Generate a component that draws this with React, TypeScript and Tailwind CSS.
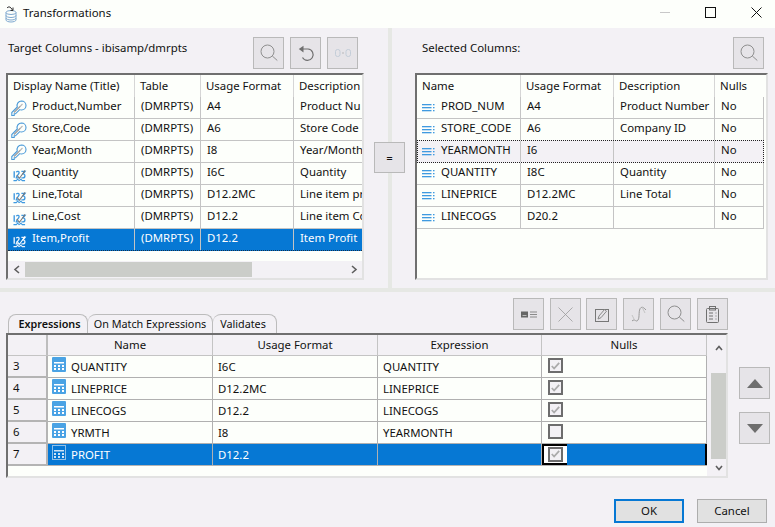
import React from "react";

const BLUE = "#3f9ae0";

function Key({ white }: { white?: boolean }) {
  const c = white ? "#d5e6f5" : "#4a9ad8";
  return (
    <svg width="16" height="17" viewBox="0 0 16 17" fill="none" strokeWidth="1.100" className="shrink-0 mt-[3px]">
      <path
        d="M10.500 1a4.500 4.500 0 0 1 0 9c-.7 0-1.300-.1-1.800-.4L4.500 13.800H3.200V15.500H.8V12.500L6.300 7a4.500 4.500 0 0 1 4.200-6z"
        stroke={c}
      />
      <path d="M3 12.500L9.500 6" stroke="#9a9a9a" />
      <path d="M9.500 6l2-2" stroke="#b8b8b8" />
    </svg>
  );
}

function NumIcon({ white }: { white?: boolean }) {
  const c = white ? "#e6f0fa" : BLUE;
  return (
    <svg width="15" height="13" viewBox="0 0 15 14" fill="none" className="shrink-0 mt-[6px] ml-[1px]">
      <path d="M1.800 2.500v7" stroke={c} strokeWidth="1.500" />
      <path d="M4 3.500c1-1.500 3.500-1 3 .8S4 7.500 4 9.500h3.500" stroke={c} strokeWidth="1.400" />
      <path d="M9.500 2.500h4l-2 2.800c2.500 0 2.500 4.200-.3 4.200H9.500" stroke={c} strokeWidth="1.400" />
      <path d="M1 12.500h3l1.500-1.500 1.500 1.500 2-1.500 1.500 1.500h3" stroke={c} strokeWidth="1.200" />
      <path d="M4.500 6.500l3 3.500L13.500 1.500" stroke={white ? "#ffffff" : "#777777"} strokeWidth="1.100" />
    </svg>
  );
}

function Lines() {
  return (
    <svg width="13" height="8" viewBox="0 0 13 8" className="shrink-0 mt-[7px]">
      <rect x="0" y="0" width="9.500" height="1.300" fill={BLUE} />
      <rect x="0" y="3" width="9.500" height="1.300" fill={BLUE} />
      <rect x="0" y="6" width="9.500" height="1.300" fill={BLUE} />
      <rect x="11" y="0" width="1.500" height="1.300" fill={BLUE} />
      <rect x="11" y="3" width="1.500" height="1.300" fill={BLUE} />
      <rect x="11" y="6" width="1.500" height="1.300" fill={BLUE} />
    </svg>
  );
}

function Calc({ white }: { white?: boolean }) {
  const fg = white ? "#cfe3f5" : "#ffffff";
  return (
    <svg width="14" height="15" viewBox="0 0 14 15" className="shrink-0 mb-[4px]">
      {white ? (
        <rect x="0.500" y="0.500" width="13" height="14" fill="none" stroke="#8fc0e8" />
      ) : (
        <rect x="0" y="0" width="14" height="15" rx="1" fill="#4aa3e4" />
      )}
      <rect x="2" y="5" width="10" height="1.500" fill={fg} />
      <rect x="2" y="8" width="2" height="2" fill={fg} />
      <rect x="6" y="8" width="2" height="2" fill={fg} />
      <rect x="10" y="8" width="2" height="2" fill={fg} />
      <rect x="2" y="11" width="2" height="2" fill={fg} />
      <rect x="6" y="11" width="2" height="2" fill={fg} />
      <rect x="10" y="11" width="2" height="2" fill={fg} />
    </svg>
  );
}

function Search() {
  return (
    <svg width="18" height="18" viewBox="0 0 18 18" fill="none" stroke="#8f8f8f" strokeWidth="1">
      <circle cx="7.500" cy="7.500" r="6.500" />
      <path d="M12.300 12l5 4.500" />
    </svg>
  );
}

function Undo() {
  return (
    <svg width="18" height="18" viewBox="0 0 18 18" fill="none" stroke="#6f6f6f" strokeWidth="1.200">
      <path d="M5 5h6a5.700 5.700 0 1 1-5.500 8.500" />
      <path d="M6.500 1.800L1.800 5l4.700 3.500z" fill="#6f6f6f" stroke="none" />
    </svg>
  );
}

function Join() {
  return (
    <svg width="18" height="8" viewBox="0 0 18 8" fill="none" stroke="#c3cdd8" strokeWidth="1">
      <rect x="1.500" y="0.500" width="4.500" height="7" rx="2" />
      <rect x="12" y="0.500" width="4.500" height="7" rx="2" />
      <rect x="8.500" y="3.500" width="1" height="1" fill="#8a8a8a" stroke="none" />
    </svg>
  );
}

function CardIcon() {
  return (
    <svg width="16" height="7" viewBox="0 0 16 7">
      <rect x="0" y="0.500" width="7" height="6" fill="#666666" />
      <rect x="1.500" y="4" width="4" height="1" fill="#bdbdbd" />
      <rect x="9" y="0.500" width="7" height="1" fill="#8a8a8a" />
      <rect x="9" y="3" width="7" height="1" fill="#8a8a8a" />
      <rect x="9" y="5.500" width="7" height="1" fill="#8a8a8a" />
    </svg>
  );
}

function XIcon() {
  return (
    <svg width="15" height="15" viewBox="0 0 15 15" stroke="#9a9a9a" strokeWidth="0.800" fill="none">
      <path d="M0.500 0.500l14 14M14.500 0.500l-14 14" />
    </svg>
  );
}

function EditIcon() {
  return (
    <svg width="14" height="15" viewBox="0 0 14 15" fill="none" stroke="#777777" strokeWidth="1">
      <rect x="0.500" y="2.500" width="13" height="12" />
      <path d="M3 12l1-3 5.500-6.500 2 1.700-5.500 6.500z" stroke="#8a8a8a" />
    </svg>
  );
}

function FxIcon() {
  return (
    <svg width="16" height="19" viewBox="0 0 16 19" fill="none" stroke="#9a9a9a" strokeWidth="1">
      <path d="M1 16c3-3 4 2 6-1s0-10 3-12.500c2-1 3.500 1 5 2.500" />
      <path d="M1 10l3 6M11 2l3 6" stroke="#c4c4c4" />
    </svg>
  );
}

function Clip() {
  return (
    <svg width="13" height="17" viewBox="0 0 13 17" fill="none" stroke="#707070" strokeWidth="1">
      <rect x="0.500" y="2.500" width="12" height="14" rx="1" />
      <rect x="3.500" y="0.500" width="6" height="3.500" />
      <path d="M3 7h4M3 10h4M3 13h4M9.500 7h1M9.500 10h1M9.500 13h1" />
    </svg>
  );
}

function ToolBtn({ children }: { children?: React.ReactNode }) {
  return (
    <div className="w-[31px] h-[32px] shrink-0 flex items-center justify-center border border-[#b9b9b9] bg-[#e6e4e8]">
      {children}
    </div>
  );
}

function AppIcon() {
  return (
    <svg width="14" height="17" viewBox="0 0 14 17" fill="none" stroke="#7fa9d0" strokeWidth="1">
      <ellipse cx="7" cy="6.500" rx="5" ry="2" />
      <path d="M2 6.500v7.500c0 1 2.200 2 5 2s5-1 5-2V6.500" />
      <path d="M2 9.500c0 1 2.200 2 5 2s5-1 5-2M2 12c0 1 2.200 2 5 2s5-1 5-2" />
      <path d="M3 2c1-1.500 3-1.500 4 0l1.500 2M9 1.500v3H6.500" stroke="#333333" />
    </svg>
  );
}

const LEFT_ROWS: { n: string; v: string[]; kind: "key" | "num" }[] = [
  { n: "Product,Number", v: ["(DMRPTS)", "A4", "Product Nu"], kind: "key" },
  { n: "Store,Code", v: ["(DMRPTS)", "A6", "Store Code"], kind: "key" },
  { n: "Year,Month", v: ["(DMRPTS)", "I8", "Year/Month"], kind: "key" },
  { n: "Quantity", v: ["(DMRPTS)", "I6C", "Quantity"], kind: "num" },
  { n: "Line,Total", v: ["(DMRPTS)", "D12.2MC", "Line item pr"], kind: "num" },
  { n: "Line,Cost", v: ["(DMRPTS)", "D12.2", "Line item Co"], kind: "num" },
  { n: "Item,Profit", v: ["(DMRPTS)", "D12.2", "Item Profit"], kind: "num" },
];

const RIGHT_ROWS = [
  ["PROD_NUM", "A4", "Product Number", "No"],
  ["STORE_CODE", "A6", "Company ID", "No"],
  ["YEARMONTH", "I6", "", "No"],
  ["QUANTITY", "I8C", "Quantity", "No"],
  ["LINEPRICE", "D12.2MC", "Line Total", "No"],
  ["LINECOGS", "D20.2", "", "No"],
];

const EXPR_ROWS = [
  { i: "3", n: "QUANTITY", u: "I6C", e: "QUANTITY", c: true },
  { i: "4", n: "LINEPRICE", u: "D12.2MC", e: "LINEPRICE", c: true },
  { i: "5", n: "LINECOGS", u: "D12.2", e: "LINECOGS", c: true },
  { i: "6", n: "YRMTH", u: "I8", e: "YEARMONTH", c: false },
  { i: "7", n: "PROFIT", u: "D12.2", e: "", c: true },
];

function Check({ on }: { on: boolean }) {
  return (
    <div className="w-[15px] h-[15px] border-2 border-[#6d6d6d] flex items-center justify-center bg-[#f3f1f5]">
      {on && (
        <svg width="9" height="8" viewBox="0 0 9 8" fill="none" stroke="#ababab" strokeWidth="1.800">
          <path d="M0.800 4l2.300 2.500L8.200 0.800" />
        </svg>
      )}
    </div>
  );
}

function LeftTable() {
  return (
    <div className="w-[358px] h-[207px] border-2 border-[#6f6f6f] border-r-[#e2e2e2] border-b-[#e2e2e2] bg-[#fdfffb] flex flex-col overflow-hidden">
      <div className="h-[22px] flex shrink-0 items-center whitespace-nowrap">
        <div className="w-[127px] pl-[5px] h-full flex items-center border-r border-[#d6d6d6]">Display Name (Title)</div>
        <div className="w-[66px] pl-[5px] h-full flex items-center border-r border-[#d6d6d6]">Table</div>
        <div className="w-[93px] pl-[5px] h-full flex items-center border-r border-[#d6d6d6]">Usage Format</div>
        <div className="pl-[5px]">Description</div>
      </div>
      {LEFT_ROWS.map((r, i) => {
        const sel = i === 6;
        return (
          <div
            key={r.n}
            className={`h-[22px] shrink-0 flex border-b whitespace-nowrap ${sel ? "bg-[#0678d4] text-white border-dotted border-[#12324e]" : "border-[#c4c4c4]"}`}
          >
            <div className="w-[127px] h-full flex gap-[5px] pl-[3px] border-r border-[#c4c4c4]">
              {r.kind === "key" ? <Key /> : <NumIcon white={sel} />}
              <span className="pt-[1px]">{r.n}</span>
            </div>
            <div className="w-[66px] h-full pt-[1px] pl-[6px] border-r border-[#c4c4c4]">{r.v[0]}</div>
            <div className="w-[93px] h-full pt-[1px] pl-[6px] border-r border-[#c4c4c4]">{r.v[1]}</div>
            <div className="pl-[6px] pt-[1px] flex-1 overflow-hidden">{r.v[2]}</div>
          </div>
        );
      })}
      <div className="flex-1" />
      <div className="h-[17px] shrink-0 flex items-center bg-[#f3f1f5]">
        <div className="w-[17px] flex justify-center">
          <svg width="8" height="9" viewBox="0 0 8 9" fill="none" stroke="#5e5e5e" strokeWidth="1.600"><path d="M6 1L2 4.500 6 8" /></svg>
        </div>
        <div className="w-[227px] h-[15px] bg-[#cbcdc9]" />
        <div className="flex-1" />
        <div className="w-[17px] flex justify-center">
          <svg width="8" height="9" viewBox="0 0 8 9" fill="none" stroke="#5e5e5e" strokeWidth="1.600"><path d="M2 1l4 3.500L2 8" /></svg>
        </div>
      </div>
    </div>
  );
}

function RightTable() {
  const widths = ["w-[104px]", "w-[93px]", "w-[101px]"];
  return (
    <div className="w-[353px] h-[207px] border-2 border-[#6f6f6f] border-r-[#e2e2e2] border-b-[#e2e2e2] bg-[#fdfffb] flex flex-col overflow-hidden">
      <div className="h-[22px] flex shrink-0 items-center">
        {["Name", "Usage Format", "Description"].map((h, i) => (
          <div key={h} className={`${widths[i]} pl-[5px] h-full flex items-center border-r border-[#d6d6d6]`}>{h}</div>
        ))}
        <div className="pl-[5px]">Nulls</div>
      </div>
      {RIGHT_ROWS.map((r, i) => {
        const focus = i === 2;
        return (
          <div
            key={r[0]}
            className={`w-[347px] shrink-0 flex whitespace-nowrap ${focus ? "h-[23px] -mt-px bg-[#f3f1f5] border border-dotted border-[#222222]" : "h-[22px] border-b border-r border-[#c4c4c4]"}`}
          >
            <div className={`${focus ? "w-[103px] pl-[4px]" : "w-[104px] pl-[5px]"} h-full flex gap-[6px] border-r border-[#c4c4c4]`}>
              <Lines />
              <span className="pt-[1px]">{r[0]}</span>
            </div>
            <div className="w-[93px] h-full pt-[1px] pl-[6px] border-r border-[#c4c4c4]">{r[1]}</div>
            <div className="w-[101px] h-full pt-[1px] pl-[6px] border-r border-[#c4c4c4]">{r[2]}</div>
            <div className="pl-[6px] pt-[1px]">{r[3]}</div>
          </div>
        );
      })}
    </div>
  );
}

function ExprTable() {
  return (
    <div className="w-[722px] h-[145px] border-2 border-[#6f6f6f] border-r-[#e2e2e2] border-b-[#e2e2e2] bg-[#fdfffb] flex overflow-hidden">
      <div className="flex-1 flex flex-col min-w-0">
        <div className="h-[21px] flex shrink-0 bg-[#f3f1f5] border-b border-[#c4c4c4]">
          <div className="w-[40px] border-r-2 border-[#bdbdbd]" />
          {[
            ["Name", "w-[165px]"],
            ["Usage Format", "w-[165px]"],
            ["Expression", "w-[164px]"],
            ["Nulls", "w-[165px]"],
          ].map(([h, w]) => (
            <div key={h} className={`${w} flex items-center justify-center border-r border-[#c4c4c4]`}>{h}</div>
          ))}
        </div>
        {EXPR_ROWS.map((r) => {
          const sel = r.i === "7";
          return (
            <div key={r.i} className="h-[22px] flex shrink-0 whitespace-nowrap">
              <div className="w-[40px] h-full flex items-center pl-[5px] bg-[#f3f1f5] border-b-2 border-r-2 border-[#b4b4b4]">{r.i}</div>
              <div className={`flex h-full border-b ${sel ? "bg-[#0678d4] text-white border-[#b4b4b4]" : "border-[#b0b0b0]"}`}>
                <div className="w-[165px] h-full flex items-center gap-[5px] pl-[4px] border-r border-[#b0b0b0]">
                  <Calc white={sel} />
                  <span>{r.n}</span>
                </div>
                <div className="w-[165px] h-full flex items-center pl-[5px] border-r border-[#b0b0b0]">{r.u}</div>
                <div className="w-[164px] h-full flex items-center pl-[5px] border-r border-[#b0b0b0]">{r.e}</div>
                <div className={`w-[165px] h-full flex items-center ${sel ? "border-r-2 border-black" : "border-r border-[#b0b0b0]"}`}>
                  {sel ? (
                    <div className="h-full w-[25px] flex items-center pl-[4px] pb-[1px] bg-white border-2 border-r-0 border-black">
                      <Check on={r.c} />
                    </div>
                  ) : (
                    <div className="pl-[6px] mb-[2px]">
                      <Check on={r.c} />
                    </div>
                  )}
                </div>
              </div>
            </div>
          );
        })}
      </div>
      <div className="w-[19px] shrink-0 bg-[#f3f1f5] flex flex-col items-end">
        <div className="h-[16px] w-[15px] flex items-end justify-center">
          <svg width="8" height="6" viewBox="0 0 8 6" fill="none" stroke="#5e5e5e" strokeWidth="1.600"><path d="M1 5l3-3.500L7 5" /></svg>
        </div>
        <div className="w-[15px] flex-1 bg-[#cbcdc9] mt-[22px]" />
        <div className="h-[17px] w-[15px] flex items-center justify-center">
          <svg width="8" height="6" viewBox="0 0 8 6" fill="none" stroke="#5e5e5e" strokeWidth="1.600"><path d="M1 1l3 3.500L7 1" /></svg>
        </div>
      </div>
    </div>
  );
}

export default function App() {
  return (
    <div
      className="w-[775px] h-[527px] overflow-hidden bg-[#f3f1f5] text-[11.400px] leading-[16px] text-[#111111] flex flex-col"
      style={{ fontFamily: '"Noto Sans", "Open Sans", sans-serif' }}
    >
      {/* title bar */}
      <div className="h-[28px] bg-[#fdfffb] shrink-0 flex items-center pl-[4px]">
        <AppIcon />
        <span className="ml-[5px] mb-[2px]">Transformations</span>
        <div className="flex-1" />
        <div className="w-[10px] h-px bg-[#c8c8c8] mr-[35px] mb-[4px]" />
        <div className="w-[11px] h-[11px] border border-[#111111] mr-[35px] mb-[4px]" />
        <svg width="11" height="11" viewBox="0 0 11 11" stroke="#111111" className="mr-[13px] mb-[4px]">
          <path d="M0.500 0.500l10 10M10.500 0.500l-10 10" />
        </svg>
      </div>

      {/* upper panes */}
      <div className="h-[260px] shrink-0 flex">
        <div className="w-[374px] shrink-0 pl-[6px] pt-[9px]">
          <div className="h-[36px] flex items-start">
            <div className="w-[247px] pl-[2px] pt-[3px] whitespace-nowrap">Target Columns - ibisamp/dmrpts</div>
            <div className="flex gap-[6px]">
              <ToolBtn><Search /></ToolBtn>
              <ToolBtn><Undo /></ToolBtn>
              <ToolBtn><Join /></ToolBtn>
            </div>
          </div>
          <LeftTable />
        </div>
        <div className="w-[31px] shrink-0 flex flex-col items-center">
          <div className="w-[4px] h-[114px] ml-[1px] bg-[#e6e8e4]" />
          <div className="w-[31px] h-[31px] shrink-0 flex items-center justify-center border border-[#b9b9b9] bg-[#e6e4e8]">=</div>
          <div className="w-[4px] flex-1 ml-[1px] bg-[#e6e8e4]" />
        </div>
        <div className="flex-1 pl-[10px] pt-[9px]">
          <div className="h-[36px] flex items-start">
            <div className="w-[318px] pl-[7px] pt-[3px]">Selected Columns:</div>
            <ToolBtn><Search /></ToolBtn>
          </div>
          <RightTable />
        </div>
      </div>

      {/* splitter */}
      <div className="h-[4px] bg-[#e6e8e4] shrink-0" />

      {/* lower pane */}
      <div className="mt-[6px] h-[35px] shrink-0 flex justify-between pr-[47px] pl-[8px]">
        <div className="self-end flex text-[10.800px]">
          <div className="w-[80px] h-[19px] flex items-center justify-center pl-[3px] font-semibold rounded-t-[8px] border border-b-0 border-[#bcbcbc]">Expressions</div>
          <div className="w-[125px] h-[19px] flex items-center justify-center rounded-t-[8px] border border-b-0 border-l-0 border-[#bcbcbc]">On Match Expressions</div>
          <div className="w-[64px] h-[19px] flex items-center justify-center pr-[3px] rounded-t-[8px] border border-b-0 border-l-0 border-[#bcbcbc]">Validates</div>
        </div>
        <div className="flex gap-[6px] self-start">
          <ToolBtn><CardIcon /></ToolBtn>
          <ToolBtn><XIcon /></ToolBtn>
          <div className="-ml-[1px]"><ToolBtn><EditIcon /></ToolBtn></div>
          <ToolBtn><FxIcon /></ToolBtn>
          <ToolBtn><Search /></ToolBtn>
          <ToolBtn><Clip /></ToolBtn>
        </div>
      </div>
      <div className="flex pl-[6px] shrink-0">
        <ExprTable />
        <div className="pl-[11px] pt-[34px] flex flex-col gap-[13px]">
          <ToolBtn>
            <svg width="16" height="9" viewBox="0 0 16 9"><path d="M8 0l8 9H0z" fill="#6e6e6e" /></svg>
          </ToolBtn>
          <ToolBtn>
            <svg width="16" height="9" viewBox="0 0 16 9"><path d="M0 0h16L8 9z" fill="#6e6e6e" /></svg>
          </ToolBtn>
        </div>
      </div>

      {/* footer */}
      <div className="flex-1 flex justify-end items-start pt-[21px] pr-[8px] gap-[13px]">
        <div className="w-[70px] h-[24px] flex items-center justify-center border-2 border-[#0678d4] bg-[#e1e1e1]">OK</div>
        <div className="w-[70px] h-[24px] flex items-center justify-center border border-[#adadad] bg-[#e1e1e1]">Cancel</div>
      </div>
    </div>
  );
}
